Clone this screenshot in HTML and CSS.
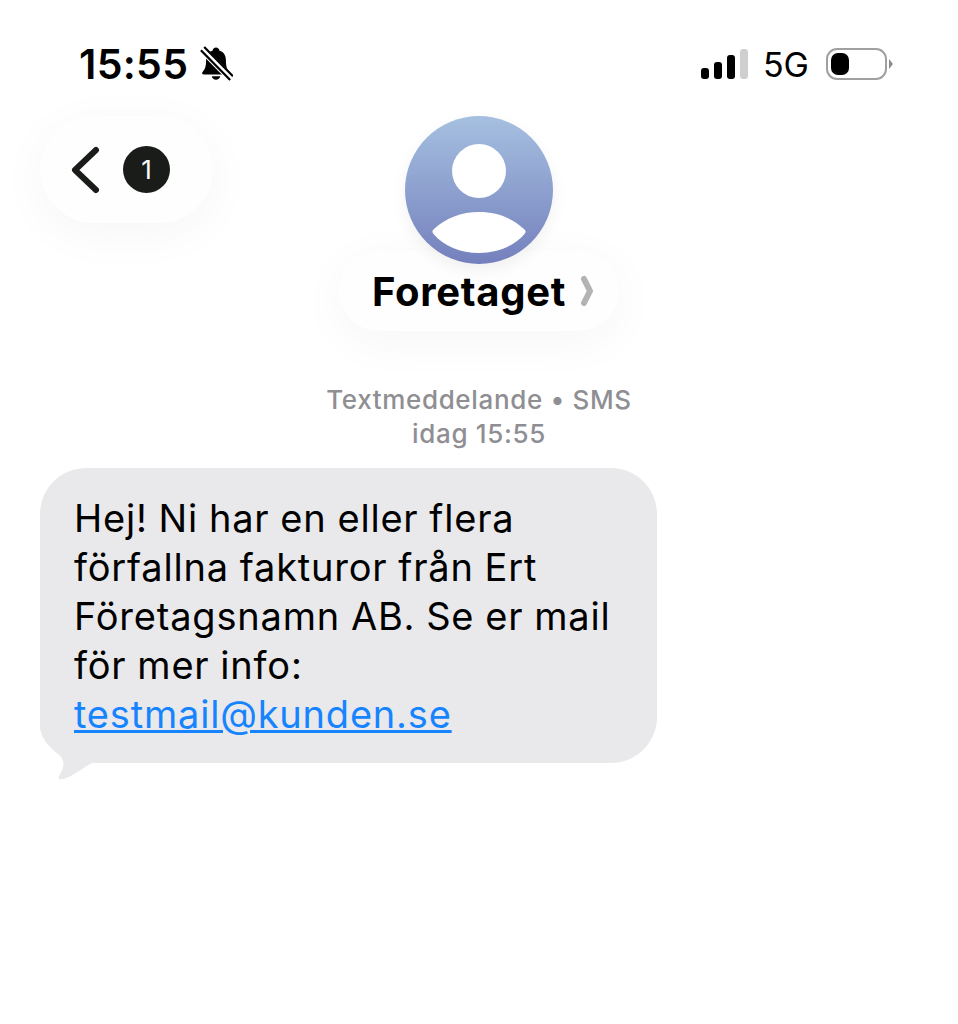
FILE: index.html
```html
<!DOCTYPE html>
<html lang="sv">
  <head>
    <meta charset="UTF-8" />
    <meta name="viewport" content="width=device-width, initial-scale=1.0" />
    <title>Meddelanden</title>
    <link rel="stylesheet" href="styles.css">
  </head>
  <body>
    <div class="status-bar">
      <div class="status-left">
        <span class="time">15:55</span>
        <svg class="bell" width="34" height="36" viewBox="0 0 36 38">
          <path d="M18 1.500c-2 0-3.500 1.500-3.500 3.200C9.500 6.200 7.500 10.500 7.500 15c0 6-1 9-3 11.500-1.500 1.800-1.800 3.500.5 3.500h26c2.300 0 2-1.700.5-3.500-2-2.500-3-5.500-3-11.500 0-4.500-2-8.800-7-10.300C21.500 3 20 1.500 18 1.500z" fill="#000"/>
          <path d="M13.500 32h9c-.5 2.300-2.300 3.800-4.500 3.800s-4-1.500-4.500-3.800z" fill="#000"/>
          <path d="M1.500 1.500L34.500 35" stroke="#fff" stroke-width="8"/>
          <path d="M2 4.500L33 36M5.500 1L36 32" stroke="#000" stroke-width="2.400"/>
        </svg>
      </div>
      <div class="status-right">
        <div class="signal">
          <span class="bar bar-1"></span>
          <span class="bar bar-2"></span>
          <span class="bar bar-3"></span>
          <span class="bar bar-4"></span>
        </div>
        <span class="network">5G</span>
        <div class="battery">
          <div class="battery-body"><span class="battery-level"></span></div>
          <span class="battery-tip"></span>
        </div>
      </div>
    </div>

    <div class="nav">
      <div class="back-pill">
        <svg width="30" height="48" viewBox="0 0 30 48">
          <path d="M26 4L5 24l21 20" fill="none" stroke="#1a1c19" stroke-width="6" stroke-linecap="round" stroke-linejoin="round"/>
        </svg>
        <span class="badge">1</span>
      </div>
      <div class="contact">
        <div class="avatar">
          <svg width="148" height="148" viewBox="0 0 148 148">
            <circle cx="74" cy="55" r="27" fill="#fff"/>
            <path d="M28.500 118c-1.500-2-1.500-3 .5-5 12-11 27-17 45-17s33 6 45 17c2 2 2 3 .5 5-10 12-27 19-45.500 19s-35.500-7-45.500-19z" fill="#fff"/>
          </svg>
        </div>
        <div class="name-pill">
          <span class="name">Foretaget</span>
          <svg width="14" height="32" viewBox="0 0 14 32">
            <path d="M4 4l6 12-6 12" fill="none" stroke="#b3b3b3" stroke-width="6" stroke-linecap="round" stroke-linejoin="round"/>
          </svg>
        </div>
      </div>
    </div>

    <div class="meta">
      <div>Textmeddelande • SMS</div>
      <div>idag 15:55</div>
    </div>

    <div class="thread">
      <div class="bubble">
        Hej! Ni har en eller flera<br />
        förfallna fakturor från Ert<br />
        Företagsnamn AB. Se er mail<br />
        för mer info:<br />
        <a class="link" href="#">testmail@kunden.se</a>
        <svg class="tail" width="60" height="62" viewBox="0 0 60 62">
          <path d="M0 0v10c2 12 10 20 18 26 8 6 6 14 2 20-3 5-1 6 3 5 11-3 19-11 29-16h8V0z" fill="#e9e9eb"/>
        </svg>
      </div>
    </div>
  </body>
</html>
```

FILE: styles.css
```css
html,
body {
  margin: 0;
  background: #fff;
}
body {
  width: 958px;
  height: 1024px;
  overflow: hidden;
  font-family: Inter, "Liberation Sans", sans-serif;
  color: #000;
}

/* status bar */
.status-bar {
  display: flex;
  justify-content: space-between;
  align-items: center;
  height: 54px;
  padding: 37px 65px 25px 79px;
}
.status-left {
  display: flex;
  align-items: center;
  gap: 11px;
}
.time {
  font-size: 41px;
  font-weight: 600;
  letter-spacing: 0.3px;
}
.status-right {
  display: flex;
  align-items: center;
}
.signal {
  display: flex;
  align-items: flex-end;
  gap: 5px;
  height: 30px;
}
.bar {
  width: 8px;
  border-radius: 3px;
  background: #000;
}
.bar-1 {
  height: 11px;
}
.bar-2 {
  height: 17px;
}
.bar-3 {
  height: 24px;
}
.bar-4 {
  height: 30px;
  background: #cfcfcf;
}
.network {
  font-size: 34px;
  margin: 0 17px 0 15px;
}
.battery {
  display: flex;
  align-items: center;
  gap: 2px;
}
.battery-body {
  display: flex;
  box-sizing: border-box;
  width: 61px;
  height: 32px;
  padding: 3px;
  border: 2.5px solid #a0a0a0;
  border-radius: 11px;
}
.battery-level {
  width: 18px;
  border-radius: 7px;
  background: #000;
}
.battery-tip {
  border-left: 4px solid #8a8a8a;
  border-top: 5px solid transparent;
  border-bottom: 5px solid transparent;
}

/* nav */
.nav {
  display: grid;
  grid-template-columns: 1fr auto 1fr;
  align-items: start;
  padding: 0 40px;
}
.back-pill {
  display: flex;
  align-items: center;
  justify-content: flex-start;
  gap: 23px;
  box-sizing: border-box;
  width: 173px;
  height: 107px;
  padding-left: 30px;
  border-radius: 54px;
  background: #fefefe;
  box-shadow: 0 10px 50px rgba(0, 0, 0, 0.04);
}
.badge {
  display: flex;
  align-items: center;
  justify-content: center;
  width: 47px;
  height: 47px;
  border-radius: 50%;
  background: #1a1c19;
  color: #fff;
  font-size: 26px;
}
.contact {
  display: flex;
  flex-direction: column;
  align-items: center;
}
.avatar {
  position: relative;
  z-index: 1;
  width: 148px;
  height: 148px;
  border-radius: 50%;
  background: linear-gradient(#a6c0e0, #7480bd);
  box-shadow: 0 6px 16px rgba(0, 0, 0, 0.06);
}
.avatar svg {
  display: block;
}
.name-pill {
  display: flex;
  align-items: center;
  justify-content: center;
  gap: 14px;
  box-sizing: border-box;
  width: 280px;
  height: 80px;
  margin-top: -13px;
  padding-left: 8px;
  border-radius: 40px;
  background: #fefefe;
  box-shadow: 0 10px 50px rgba(0, 0, 0, 0.04);
}
.name {
  font-size: 40px;
  font-weight: 700;
  letter-spacing: 0.7px;
}

/* thread */
.meta {
  margin-top: 52px;
  text-align: center;
  font-size: 26px;
  font-weight: 500;
  line-height: 34px;
  letter-spacing: 0.65px;
  color: #8e8e93;
}
.thread {
  padding: 17px 40px 0;
}
.bubble {
  position: relative;
  box-sizing: border-box;
  width: 617px;
  height: 295px;
  padding: 26px 0 0 34px;
  border-radius: 46px;
  background: #e9e9eb;
  font-size: 38px;
  line-height: 49px;
  letter-spacing: 0.8px;
  word-spacing: -0.6px;
  color: #000;
}
.link {
  position: relative;
  z-index: 1;
  color: #1784ff;
  text-decoration-thickness: 3px;
}
.tail {
  position: absolute;
  left: 0;
  top: 250px;
}
```
